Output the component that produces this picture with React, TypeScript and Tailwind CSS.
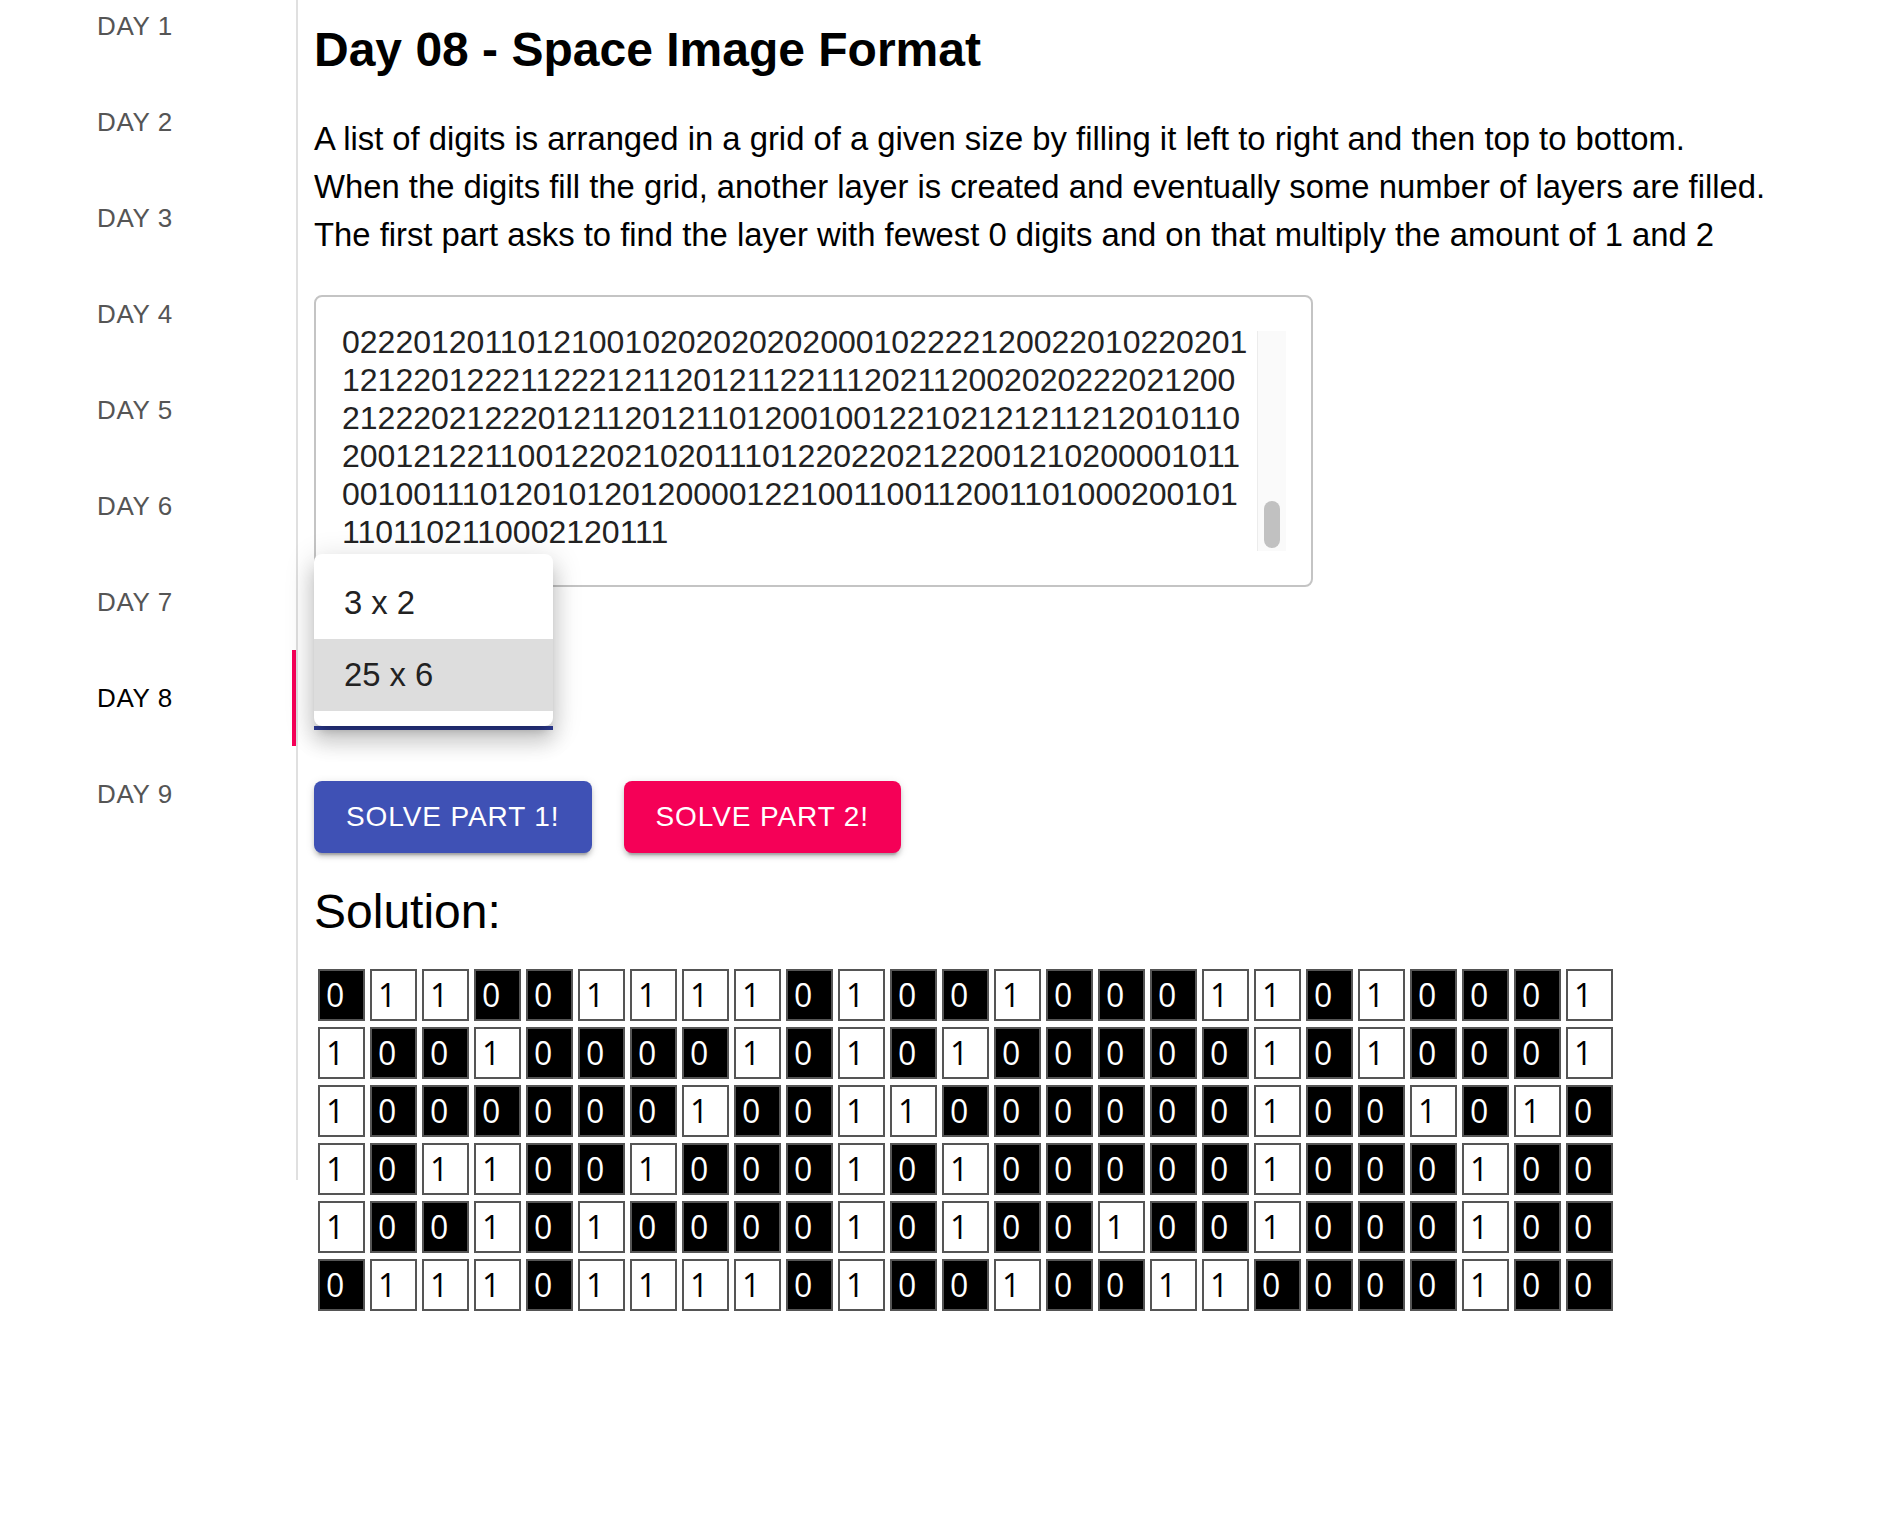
import React from "react";

const days = ["DAY 1", "DAY 2", "DAY 3", "DAY 4", "DAY 5", "DAY 6", "DAY 7", "DAY 8", "DAY 9"];

const textLines = [
  "022201201101210010202020202000102222120022010220201",
  "121220122211222121120121122111202112002020222021200",
  "212220212220121120121101200100122102121211212010110",
  "200121221100122021020111012202202122001210200001011",
  "001001110120101201200001221001100112001101000200101",
  "1101102110002120111",
];

const grid = [
  "0110011110100100011010001",
  "1001000010101000001010001",
  "1000000100110000001001010",
  "1011001000101000001000100",
  "1001010000101001001000100",
  "0111011110100100110000100",
];

export default function App() {
  return (
    <div className="flex w-[1886px] min-h-[1532px] bg-white font-['Liberation_Sans',Arial,sans-serif] text-black">
      {/* Sidebar */}
      <div className="w-[298px] h-[1180px] shrink-0 border-r-2 border-[#e0e0e0] overflow-hidden">
        <div className="-mt-[22px]">
          {days.map((d, i) => {
            const selected = i === 7;
            return (
              <div
                key={d}
                className={
                  "relative h-[96px] flex items-center pl-[97px] text-[26px] tracking-[0.6px] uppercase " +
                  (selected ? "text-black" : "text-[#555555]")
                }
              >
                {d}
                {selected && <div className="absolute right-0 top-0 w-[4px] h-full bg-[#f50057]" />}
              </div>
            );
          })}
        </div>
      </div>

      {/* Main */}
      <div className="flex-1 pl-[16px] pt-[22px]">
        <h1 className="text-[48px] leading-[56px] font-bold">Day 08 - Space Image Format</h1>
        <p className="mt-[37px] text-[32.8px] leading-[48px]">
          A list of digits is arranged in a grid of a given size by filling it left to right and then top to bottom.
          <br />
          When the digits fill the grid, another layer is created and eventually some number of layers are filled.
          <br />
          The first part asks to find the layer with fewest 0 digits and on that multiply the amount of 1 and 2
        </p>

        {/* Textarea */}
        <div className="mt-[36px] w-[999px] h-[292px] border-2 border-[#c4c4c4] rounded-[8px] pl-[26px] pr-[25px] pt-[26px] pb-[34px] flex items-end">
          <div className="flex-1 h-[228px] flex flex-col justify-end text-[32px] leading-[38px] text-[#222222] whitespace-pre">
            {textLines.map((l, i) => (
              <div key={i}>{l}</div>
            ))}
          </div>
          <div className="w-[29px] h-[220px] bg-[#fafafa] border-l border-[#ececec] flex flex-col justify-end items-center pb-[3px]">
            <div className="w-[16px] h-[47px] rounded-full bg-[#c1c1c1]" />
          </div>
        </div>

        {/* Select with open menu */}
        <div className="relative mt-[53px] w-[239px] h-[90px] border-b-4 border-[#303f9f]">
          <div className="absolute left-0 -top-[86px] w-[239px] h-[172px] bg-white rounded-[8px] pt-[13px] pb-[15px] shadow-[0px_10px_10px_-6px_rgba(0,0,0,0.2),0px_16px_20px_2px_rgba(0,0,0,0.14),0px_6px_28px_4px_rgba(0,0,0,0.12)]">
            <div className="h-[72px] flex items-center pl-[30px] text-[32.8px] text-[#222222]">3 x 2</div>
            <div className="h-[72px] flex items-center pl-[30px] text-[32.8px] text-[#222222] bg-[#dddddd]">25 x 6</div>
          </div>
        </div>

        {/* Buttons */}
        <div className="mt-[51px] flex gap-[32px]">
          <button className="h-[72px] px-[32px] rounded-[8px] bg-[#3f51b5] text-white text-[28px] tracking-[0.9px] uppercase shadow-[0px_6px_2px_-4px_rgba(0,0,0,0.2),0px_4px_4px_0px_rgba(0,0,0,0.14),0px_2px_10px_0px_rgba(0,0,0,0.12)]">
            Solve Part 1!
          </button>
          <button className="h-[72px] px-[32px] rounded-[8px] bg-[#f50057] text-white text-[28px] tracking-[0.9px] uppercase shadow-[0px_6px_2px_-4px_rgba(0,0,0,0.2),0px_4px_4px_0px_rgba(0,0,0,0.14),0px_2px_10px_0px_rgba(0,0,0,0.12)]">
            Solve Part 2!
          </button>
        </div>

        <h2 className="mt-[31px] text-[48px] leading-[56px]">Solution:</h2>

        <div className="mt-[29px] ml-[4px] grid grid-cols-[repeat(25,47px)] gap-x-[5px] gap-y-[6px] font-['Open_Sans','Noto_Sans',sans-serif]">
          {grid.flatMap((row, r) =>
            row.split("").map((c, i) => (
              <div
                key={r + "-" + i}
                className={
                  "h-[52px] border-2 border-[#555555] flex items-center pl-[6px] text-[32px] leading-none " +
                  (c === "0" ? "bg-black text-white" : "bg-white text-black")
                }
              >
                {c}
              </div>
            ))
          )}
        </div>
      </div>
    </div>
  );
}
